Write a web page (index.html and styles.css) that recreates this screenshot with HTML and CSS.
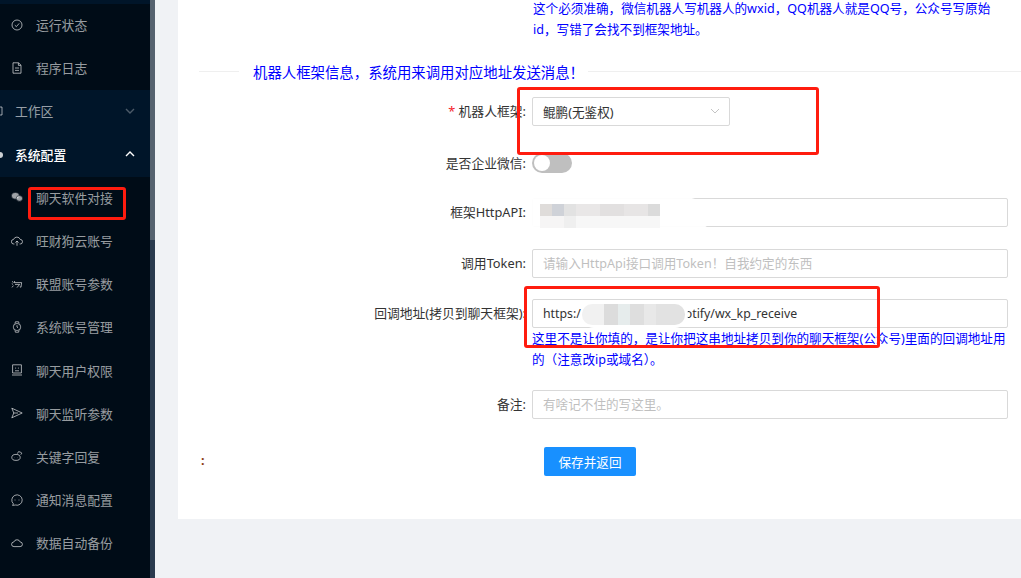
FILE: index.html
```html
<!DOCTYPE html>
<html lang="zh-CN">
<head>
<meta charset="utf-8">
<title>聊天软件对接</title>
<link rel="stylesheet" href="styles.css">
</head>
<body>
<div class="app">
  <aside class="sidebar">
    <nav class="menu">
      <div class="top-strip"></div>
      <div class="sub">
        <a class="item"><svg class="ico" viewBox="0 0 12 12"><circle cx="6" cy="6" r="5"/><path d="M3.8 6.2 5.4 7.6 8.2 4.4"/></svg>运行状态</a>
        <a class="item"><svg class="ico" viewBox="0 0 12 12"><path d="M2 .8H7.6L10 3.2V11.2H2ZM7.4 1V3.4H9.8M4 6H8M4 8.4H8"/></svg>程序日志</a>
      </div>
      <div class="group">
        <a class="head"><svg class="head-ico" viewBox="0 0 4 10"><path d="M-4 1H2V9H-4"/></svg>工作区<svg class="chev dim" viewBox="0 0 10 6"><path d="M1 1 5 5 9 1"/></svg></a>
        <a class="head active"><svg class="head-ico" viewBox="0 0 4 10"><circle cx="0" cy="5" r="3"/></svg>系统配置<svg class="chev" viewBox="0 0 10 6"><path d="M1 5 5 1 9 5"/></svg></a>
      </div>
      <div class="sub">
        <a class="item"><svg class="ico solid" viewBox="0 0 12 12"><ellipse cx="4.4" cy="4.8" rx="4" ry="3.4"/><ellipse cx="8.4" cy="7.4" rx="3.2" ry="2.8"/></svg>聊天软件对接</a>
        <a class="item"><svg class="ico" viewBox="0 0 12 12"><path d="M3.4 9H2.8A2.3 2.3 0 0 1 2.6 4.4 3.5 3.5 0 0 1 9.2 4.4 2.3 2.3 0 0 1 9.2 9H8.6M6 10.8V6.2M4.4 7.6 6 6 7.6 7.6"/></svg>旺财狗云账号</a>
        <a class="item"><svg class="ico" viewBox="0 0 12 12"><path d="M1 3.4 2.4 4.4M.8 5.6 2 6.4M1 9.4 2.4 7.6M3.8 3 3 4.6H10.6L10 9.2 8.8 8.8M4 6.4H8.6L6 9.6"/></svg>联盟账号参数</a>
        <a class="item"><svg class="ico" viewBox="0 0 12 12"><rect x="2.4" y="2.6" width="7.2" height="6.8" rx="3"/><path d="M4 2.4 4.4.8H7.6L8 2.4M4 9.6 4.4 11.2H7.6L8 9.6M6 4.2V6L7 6.8"/></svg>系统账号管理</a>
        <a class="item"><svg class="ico" viewBox="0 0 12 12"><path d="M1.6.8H10.4V9H1.6ZM1 11H11M4.6 3.6V4.6M7.4 3.6V4.6M4 6.8H8"/></svg>聊天用户权限</a>
        <a class="item"><svg class="ico" viewBox="0 0 12 12"><path d="M.8 1.2 11.2 6 .8 10.8 2.8 6ZM2.8 6H7"/></svg>聊天监听参数</a>
        <a class="item"><svg class="ico" viewBox="0 0 12 12"><ellipse cx="5" cy="7.4" rx="4.2" ry="3"/><path d="M6.4 3.6 7.6 1.6 9.6 2.2M9.6 4.4A1 1 0 1 0 9.6 2.4M3.4 7.6H3.6M6.2 7.6H6.4"/></svg>关键字回复</a>
        <a class="item"><svg class="ico" viewBox="0 0 12 12"><path d="M2.4 9.8A5.2 5.2 0 1 1 4.4 11L1.6 11.4Z"/><path d="M3.6 6H4.4M7.6 6H8.4"/></svg>通知消息配置</a>
        <a class="item"><svg class="ico" viewBox="0 0 12 12"><path d="M3 9.6A2.3 2.3 0 0 1 2.8 5 3.4 3.4 0 0 1 9.2 5 2.3 2.3 0 0 1 9 9.6Z"/></svg>数据自动备份</a>
      </div>
    </nav>
    <div class="scrollbar"><div class="thumb"></div></div>
  </aside>

  <main class="main">
    <section class="card">
      <p class="hint hint-top">这个必须准确，微信机器人写机器人的wxid，QQ机器人就是QQ号，公众号写原始id，写错了会找不到框架地址。</p>

      <div class="divider"><span class="divider-text">机器人框架信息，系统用来调用对应地址发送消息！</span></div>

      <form class="form">
        <div class="row row-select">
          <label class="label"><span class="req">*</span> 机器人框架:</label>
          <div class="control">
            <div class="select"><span>鲲鹏(无鉴权)</span><svg class="select-arrow" viewBox="0 0 10 6"><path d="M1 1 5 5 9 1"/></svg></div>
          </div>
        </div>
        <div class="row row-switch">
          <label class="label">是否企业微信:</label>
          <div class="control"><span class="switch"><span class="knob"></span></span></div>
        </div>
        <div class="row row-api">
          <label class="label">框架HttpAPI:</label>
          <div class="control">
            <div class="input"></div>
            <div class="smear smear-api"><div class="mosaic mosaic-api"></div></div>
          </div>
        </div>
        <div class="row row-token">
          <label class="label">调用Token:</label>
          <div class="control"><div class="input placeholder">请输入HttpApi接口调用Token！自我约定的东西</div></div>
        </div>
        <div class="row row-callback">
          <label class="label">回调地址(拷贝到聊天框架):</label>
          <div class="control">
            <div class="input value">https:/<span class="gap"></span>otify/wx_kp_receive</div>
            <div class="smear smear-cb"><div class="mosaic mosaic-cb"></div></div>
            <p class="hint hint-cb">这里不是让你填的，是让你把这串地址拷贝到你的聊天框架(公众号)里面的回调地址用的（注意改ip或域名）。</p>
          </div>
        </div>
        <div class="row row-note">
          <label class="label">备注:</label>
          <div class="control"><div class="input placeholder">有啥记不住的写这里。</div></div>
        </div>
        <div class="row row-action">
          <span class="colon">:</span>
          <button class="btn" type="button">保存并返回</button>
        </div>
      </form>
    </section>
  </main>
</div>
<div class="mark mark-nav"></div>
<div class="mark mark-select"></div>
<div class="mark mark-callback"></div>
</body>
</html>
```

FILE: styles.css
```css
* { box-sizing: border-box; }
html, body { margin: 0; height: 578px; overflow: hidden; }
body {
  position: relative;
  font-family: "Noto Sans", "Noto Sans CJK SC", sans-serif;
  font-size: 12.6px;
  background: #f0f2f5;
  color: #333;
}
.app { display: flex; height: 578px; }

/* sidebar */
.sidebar { display: flex; flex: 0 0 155px; height: 578px; background: #000c17; overflow: hidden; font-size: 12.8px; }
.menu { width: 150px; display: flex; flex-direction: column; }
.top-strip { height: 4px; background: #001529; flex: none; }
.sub { display: flex; flex-direction: column; background: #000c17; }
.group { display: flex; flex-direction: column; background: #001529; }
.item, .head { display: flex; align-items: center; height: 43.2px; padding-bottom: 2px; color: rgba(255,255,255,.6); white-space: nowrap; }
.item { padding-left: 11px; }
.ico { width: 12px; height: 12px; margin-right: 13px; fill: none; stroke: rgba(255,255,255,.62); stroke-width: 1; flex: none; }
.ico.solid { fill: rgba(255,255,255,.62); stroke: #000c17; stroke-width: .6; }
.head { position: relative; padding-left: 15px; }
.head.active { color: #fff; font-weight: 500; }
.head-ico { position: absolute; left: 0; top: 16px; width: 4px; height: 10px; fill: none; stroke: rgba(255,255,255,.6); }
.head.active .head-ico { fill: rgba(255,255,255,.8); stroke: none; }
.chev { width: 10px; height: 6px; margin-left: auto; margin-right: 15px; fill: none; stroke: #fff; stroke-width: 1.4; }
.chev.dim { stroke: rgba(255,255,255,.3); }
.scrollbar { width: 5px; height: 100%; background: #2a3a4e; }
.thumb { height: 240px; background: #56626f; }

/* content */
.main { flex: 1; min-width: 0; padding-left: 23px; }
.card { height: 519px; background: #fff; overflow: hidden; }
.hint { margin: 0; color: #0000ff; line-height: 21px; }
.hint-top { margin: -2px 28px 0 355px; height: 42px; }
.divider { display: flex; align-items: center; height: 20px; margin: 21px 0 0 21px; color: #0000ff; font-size: 14.4px; }
.divider::before { content: ""; flex: 0 0 40px; height: 1px; background: #efefef; }
.divider::after { content: ""; flex: 1; height: 1px; background: #efefef; }
.divider-text { padding: 0 4px 0 14px; white-space: nowrap; }

.form { display: flex; flex-direction: column; }
.row { display: flex; align-items: flex-start; }
.label { flex: 0 0 348px; height: 29px; line-height: 29px; text-align: right; white-space: nowrap; font-size: 12.8px; }
.control { position: relative; flex: 0 0 476px; margin-left: 6px; }
.req { color: #f5222d; }
.row-select { margin-top: 16px; }
.row-switch { margin-top: 23px; }
.row-api { margin-top: 20px; }
.row-token { margin-top: 22px; }
.row-callback { margin-top: 21px; }
.row-note { margin-top: 20px; }
.row-action { margin-top: 28px; position: relative; }

.select {
  display: flex; align-items: center; justify-content: space-between;
  width: 198px; height: 29px; padding: 0 9px 0 10px;
  border: 1px solid #d9d9d9; border-radius: 2px; color: #333;
}
.select-arrow { width: 10px; height: 6px; fill: none; stroke: #c4c4c4; margin-top: -2px; }
.switch { display: block; position: relative; width: 40px; height: 20px; margin-top: 4px; background: #bfbfbf; border-radius: 10px; }
.knob { position: absolute; left: 2px; top: 2px; width: 16px; height: 16px; border-radius: 50%; background: #fff; }
.input { height: 29px; line-height: 27px; padding: 0 10px; border: 1px solid #d9d9d9; border-radius: 2px; white-space: nowrap; background: #fff; }
.placeholder { color: #bfbfbf; }
.value { color: #333; display: flex; font-size: 12.3px; }
.gap { flex: 0 0 104px; }

.smear { position: absolute; background: rgba(255,255,255,.95); }
.smear-api { left: -5px; top: -1px; width: 182px; height: 31px; border-radius: 4px 40px 12px 14px; padding: 7px 0 0 13px; }
.mosaic-api {
  width: 120px; height: 24px;
  background:
    linear-gradient(90deg, #dfdcda 0 12px, #cfd2d8 12px 24px, #e2e2e2 24px 36px, #e9e7e7 36px 60px, #e2e0e0 60px 84px, #e7e5e5 84px 108px, #dbdbdb 108px 120px) 0 0 / 100% 12px no-repeat,
    linear-gradient(90deg, #f6f5f5 0 24px, #efefef 24px 36px, #f7f7f7 36px 120px) 0 12px / 100% 12px no-repeat;
}
.smear-cb { left: 49px; top: 2px; width: 107px; height: 27px; border-radius: 13px; padding: 3px 0 0 1px; background: #fff; }
.mosaic-cb {
  width: 103px; height: 21px; border-radius: 10px;
  background: linear-gradient(90deg, #f1f1f1 0 22px, #dcdcdc 22px 36px, #e6ecec 36px 48px, #dedede 48px 62px, #e8e8e8 62px 74px, #e2e2e2 74px 103px);
}

.colon { position: absolute; left: 23px; top: 5px; color: #8b3a10; font-weight: 700; }
.btn {
  margin-left: 366px; width: 92px; height: 29px; padding: 0;
  font: inherit; color: #fff; background: #1890ff; border: 0; border-radius: 2px;
}

/* hand-drawn annotations over the screenshot */
.mark { position: absolute; border: 3px solid #ff1c0f; border-radius: 3px; }
.mark-nav { left: 28px; top: 187px; width: 98px; height: 33px; }
.mark-select { left: 517px; top: 87px; width: 302px; height: 68px; }
.mark-callback { left: 524px; top: 286px; width: 356px; height: 62px; }
```
